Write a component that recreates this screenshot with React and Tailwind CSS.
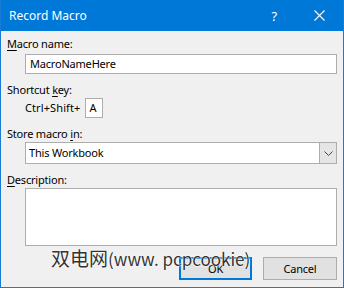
const Key = ({ children }) => <span className="underline underline-offset-[2px]">{children}</span>;

const CloseIcon = () => (
  <svg width="11" height="11" viewBox="0 0 11 11" className="block">
    <path d="M0.5 0.5L10.5 10.5M10.5 0.5L0.5 10.5" stroke="#fff" strokeWidth="1.1" fill="none" />
  </svg>
);

const Chevron = () => (
  <svg width="9" height="5" viewBox="0 0 9 5" className="block">
    <path d="M0.5 0.5L4.5 4.5L8.5 0.5" stroke="#444" strokeWidth="1" fill="none" />
  </svg>
);

export default function App() {
  return (
    <div className="w-[344px] h-[288px] flex flex-col bg-[#f0f0f0] border-x border-b border-[#1a7bd4] text-[11px] leading-[16px] tracking-[-0.2px] text-black font-['Segoe_UI','Noto_Sans',sans-serif] overflow-hidden">
      <div className="h-[31px] shrink-0 -mx-px flex items-center bg-[#0078d7] text-white">
        <span className="ml-[9px] text-[12px] tracking-normal">Record Macro</span>
        <span className="ml-auto mr-[37px] text-[13px]">?</span>
        <span className="mr-[19px]"><CloseIcon /></span>
      </div>

      <div className="relative flex flex-col pl-[6px] pt-[5px]">
        <div><Key>M</Key>acro name:</div>
        <div className="ml-[18px] mt-[2px] w-[312px] h-[20px] flex items-center bg-white border border-[#adadad] px-[4px]">
          MacroNameHere
        </div>

        <div className="mt-[8px]">Shortcut <Key>k</Key>ey:</div>
        <div className="ml-[18px] h-[20px] flex items-center">
          <span className="tracking-[0.1px]">Ctrl+Shift+</span>
          <div className="ml-[5px] w-[18px] h-[20px] flex items-center bg-white border border-[#adadad] pl-[3px]">A</div>
        </div>

        <div className="mt-[8px]">Store macro <Key>i</Key>n:</div>
        <div className="ml-[18px] w-[312px] h-[22px] flex bg-white border border-[#adadad]">
          <span className="flex-1 flex items-center pl-[3px]">This Workbook</span>
          <div className="w-[17px] flex items-center justify-center bg-[#e5e5e5] border-l border-[#adadad]">
            <Chevron />
          </div>
        </div>

        <div className="mt-[8px]"><Key>D</Key>escription:</div>
        <div className="ml-[18px] w-[312px] h-[58px] bg-white border border-[#adadad]" />

        <div className="mt-[11px] flex justify-end pr-[6px] gap-[11px]">
          <div className="w-[73px] h-[23px] flex items-center justify-center bg-[#e1e1e1] border-2 border-[#0078d7]">OK</div>
          <div className="w-[74px] h-[23px] flex items-center justify-center bg-[#e1e1e1] border border-[#adadad]">Cancel</div>
        </div>

        <div className="absolute left-[50px] top-[215px] leading-[24px] tracking-normal text-[#333] font-['Noto_Sans_CJK_SC','Liberation_Sans',sans-serif] [text-shadow:0_0_2px_#fff,0_0_2px_#fff,0_0_1px_#fff] whitespace-nowrap">
          <span className="text-[19px]">双电网</span>
          <span className="text-[17px]">(www. pcpcookie)</span>
        </div>
      </div>
    </div>
  );
}
